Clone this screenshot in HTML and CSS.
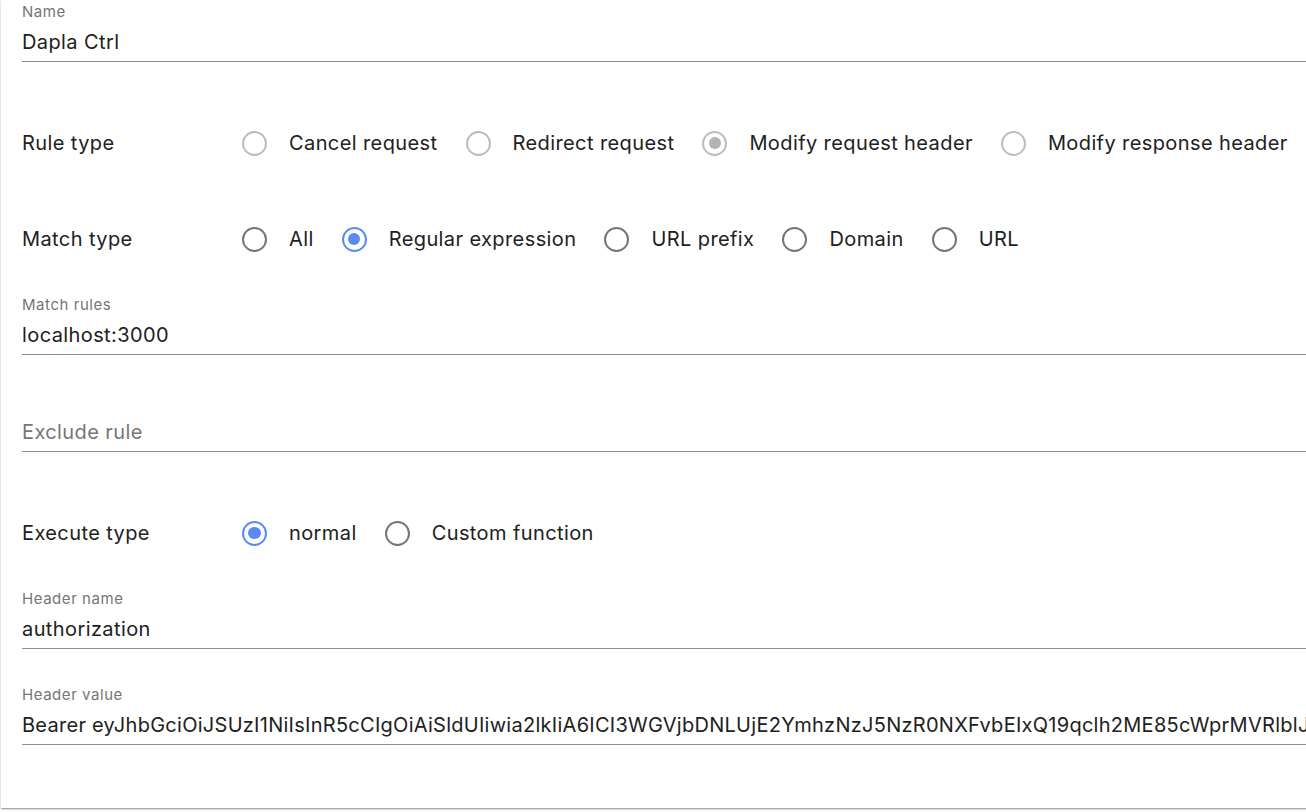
FILE: index.html
```html
<!DOCTYPE html>
<html lang="en">
<head>
<meta charset="utf-8">
<title>Rule editor</title>
<link rel="stylesheet" href="styles.css">
</head>
<body>
<div class="card">
  <div class="field field-name">
    <div class="field-label">Name</div>
    <div class="field-input">Dapla Ctrl</div>
  </div>

  <div class="radio-row row-rule">
    <div class="row-label">Rule type</div>
    <div class="radio-group">
      <label class="radio-opt"><span class="radio disabled"></span><span class="opt-text">Cancel request</span></label>
      <label class="radio-opt"><span class="radio disabled"></span><span class="opt-text">Redirect request</span></label>
      <label class="radio-opt"><span class="radio disabled checked"></span><span class="opt-text">Modify request header</span></label>
      <label class="radio-opt"><span class="radio disabled"></span><span class="opt-text">Modify response header</span></label>
    </div>
  </div>

  <div class="radio-row row-match">
    <div class="row-label">Match type</div>
    <div class="radio-group">
      <label class="radio-opt"><span class="radio"></span><span class="opt-text">All</span></label>
      <label class="radio-opt"><span class="radio checked"></span><span class="opt-text">Regular expression</span></label>
      <label class="radio-opt"><span class="radio"></span><span class="opt-text">URL prefix</span></label>
      <label class="radio-opt"><span class="radio"></span><span class="opt-text">Domain</span></label>
      <label class="radio-opt"><span class="radio"></span><span class="opt-text">URL</span></label>
    </div>
  </div>

  <div class="field field-rules">
    <div class="field-label">Match rules</div>
    <div class="field-input">localhost:3000</div>
  </div>

  <div class="field field-exclude">
    <div class="field-label"></div>
    <div class="field-input placeholder">Exclude rule</div>
  </div>

  <div class="radio-row row-exec">
    <div class="row-label">Execute type</div>
    <div class="radio-group">
      <label class="radio-opt"><span class="radio checked"></span><span class="opt-text">normal</span></label>
      <label class="radio-opt"><span class="radio"></span><span class="opt-text">Custom function</span></label>
    </div>
  </div>

  <div class="field field-hname">
    <div class="field-label">Header name</div>
    <div class="field-input">authorization</div>
  </div>

  <div class="field field-hvalue">
    <div class="field-label">Header value</div>
    <div class="field-input token">Bearer eyJhbGciOiJSUzI1NiIsInR5cCIgOiAiSldUIiwia2lkIiA6ICI3WGVjbDNLUjE2YmhzNzJ5NzR0NXFvbEIxQ19qclh2ME85cWprMVRlblJ</div>
  </div>
</div>
</body>
</html>
```

FILE: styles.css
```css
html, body {
  margin: 0;
  padding: 0;
  background: #ffffff;
  overflow: hidden;
}

body {
  font-family: Inter, "Liberation Sans", sans-serif;
  color: #212121;
  width: 1306px;
  height: 812px;
}

.card {
  margin-left: 1px;
  width: 1360px;
  height: 808px;
  box-sizing: border-box;
  padding: 3px 0 0 21px;
  background: #fff;
  box-shadow: 0 1px 3px rgba(0,0,0,0.2), 0 1px 1px rgba(0,0,0,0.14), 0 2px 1px -1px rgba(0,0,0,0.12);
  display: flex;
  flex-direction: column;
}

.field {
  display: flex;
  flex-direction: column;
  border-bottom: 1px solid #8e8e8e;
  width: 1400px;
}

.field-label {
  height: 18px;
  font-size: 15px;
  line-height: 18px;
  letter-spacing: 0.55px;
  color: #767676;
}

.field-input {
  height: 30px;
  margin-top: 6px;
  margin-bottom: 4px;
  font-size: 20px;
  line-height: 30px;
  letter-spacing: 0.4px;
  color: #212121;
  white-space: nowrap;
}

.field-input.token {
  letter-spacing: 0.27px;
}

.placeholder {
  color: #767676;
}

.field-rules { margin-top: 33px; }
.field-exclude { margin-top: 38px; }
.field-hname { margin-top: 33px; }
.field-hvalue { margin-top: 37px; }

.radio-row {
  display: flex;
  align-items: center;
  height: 48px;
}

.row-rule { margin-top: 57px; }
.row-match { margin-top: 48px; }
.row-exec { margin-top: 57px; }

.row-label {
  width: 209px;
  flex: none;
  font-size: 20px;
  letter-spacing: 0.4px;
  color: #212121;
}

.radio-group {
  display: flex;
  align-items: center;
}

.radio-opt {
  display: flex;
  align-items: center;
  margin-right: 17px;
  font-size: 20px;
  letter-spacing: 0.4px;
  color: #212121;
  white-space: nowrap;
}

.radio {
  width: 25px;
  height: 25px;
  box-sizing: border-box;
  border: 2.5px solid #757575;
  border-radius: 50%;
  margin: 0 22px 0 11px;
  display: flex;
  align-items: center;
  justify-content: center;
  flex: none;
}

.radio.checked {
  border-color: #5b8af7;
}

.radio.checked::after {
  content: "";
  width: 12.5px;
  height: 12.5px;
  border-radius: 50%;
  background: #5b8af7;
}

.radio.disabled {
  border-color: #bdbdbd;
}

.radio.disabled.checked::after {
  background: #b3b3b3;
}
```
